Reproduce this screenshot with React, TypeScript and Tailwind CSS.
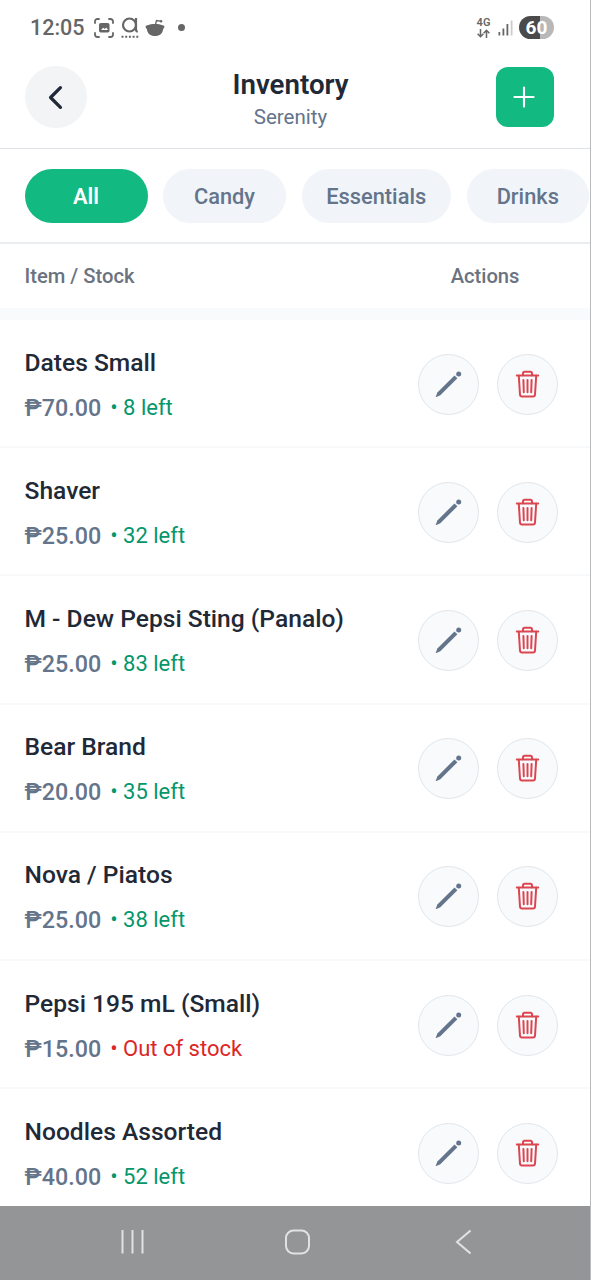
import { IoAdd, IoChevronBack } from 'react-icons/io5';

const categories = [
  { name: 'All', width: 'w-[123px]' },
  { name: 'Candy', width: 'w-[123px]' },
  { name: 'Essentials', width: 'w-[149.5px]' },
  { name: 'Drinks', width: 'w-[122.5px]' },
];

const items = [
  { name: 'Dates Small', price: '70.00', stock: 8 },
  { name: 'Shaver', price: '25.00', stock: 32 },
  { name: 'M - Dew Pepsi Sting (Panalo)', price: '25.00', stock: 83 },
  { name: 'Bear Brand', price: '20.00', stock: 35 },
  { name: 'Nova / Piatos', price: '25.00', stock: 38 },
  { name: 'Pepsi 195 mL (Small)', price: '15.00', stock: 0 },
  { name: 'Noodles Assorted', price: '40.00', stock: 52 },
];

function PencilIcon() {
  return (
    <svg width="31" height="31" viewBox="0 0 31 31" fill="currentColor">
      <path d="M21.500 6.400l2.900 2.900L7.300 26.300 3.400 28q-.8.200-.6-.6l1.600-3.900z" />
      <circle cx="25.700" cy="5.100" r="2.500" />
    </svg>
  );
}

function TrashIcon() {
  return (
    <svg width="31" height="31" viewBox="0 0 31 31" fill="none" stroke="currentColor" strokeWidth="2" strokeLinecap="round" strokeLinejoin="round">
      <path d="M4.800 6.500h21.400" />
      <path d="M11 6.200V4.200a1.400 1.400 0 0 1 1.400-1.400h6.200A1.400 1.400 0 0 1 20 4.200v2" />
      <path d="M6.800 6.800l1.200 18.700a2 2 0 0 0 2 1.900h11a2 2 0 0 0 2-1.900L24.200 6.800" />
      <path d="M11.400 11l.4 12.200M15.500 11v12.200M19.600 11l-.4 12.200" />
    </svg>
  );
}

function StatusBar() {
  return (
    <div className="flex h-[55px] shrink-0 items-center justify-between pl-[30px] pr-[36px] text-[#666]">
      <div className="flex items-center">
        <span className="w-[64px] pt-[2px] text-[21.5px] font-medium">12:05</span>

        {/* Screenshot */}
        <svg width="20" height="20" viewBox="0 0 20 20" fill="none" stroke="currentColor" strokeWidth="1.8" strokeLinecap="round">
          <path d="M1 5V3.5A2.5 2.5 0 0 1 3.5 1H5M15 1h1.5A2.5 2.5 0 0 1 19 3.5V5M19 15v1.5a2.5 2.5 0 0 1-2.5 2.5H15M5 19H3.5A2.5 2.5 0 0 1 1 16.5V15" />
          <rect x="5" y="5" width="10.5" height="9.5" rx="1.8" fill="currentColor" stroke="none" />
          <path d="M7 12l2.2-2.2 1.6 1.2 1.5-1.6L14 12z" fill="#fff" stroke="none" />
        </svg>

        {/* App notification */}
        <svg className="ml-[7px]" width="18" height="22" viewBox="0 0 18 22" fill="none" stroke="currentColor" strokeWidth="2.2">
          <circle cx="8.5" cy="8" r="6.5" />
          <path d="M15 1v11.5q0 2 1.8 2" />
          <path d="M.5 19.800h17" strokeWidth="2" strokeDasharray="2 1.700" />
        </svg>

        {/* Reddit */}
        <svg className="ml-[6px]" width="20" height="18" viewBox="0 0 20 18" fill="currentColor">
          <path d="M2.6 6.2C4.5 5.500 7 5 10 5s5.500.5 7.400 1.200c2.400-.2 2.700 2.600.7 3.700C17.800 14.300 14.500 17 10 17S2.200 14.300 1.900 9.900C-.1 8.800.2 6 2.600 6.200z" />
          <path d="M10.500 5.500l1-4 4 .6" fill="none" stroke="currentColor" strokeWidth="1.300" />
          <circle cx="16" cy="2.200" r="1.300" />
        </svg>
        <span className="ml-[13px] size-[7px] rounded-full bg-[#666]" />
      </div>

      <div className="flex items-center">
        <div className="flex w-[15px] flex-col items-center">
          <span className="text-[11px] font-semibold leading-[10px]">4G</span>
          <svg className="mt-px" width="13" height="9" viewBox="0 0 13 9" fill="none" stroke="currentColor" strokeWidth="1.500">
            <path d="M3.500 0v7.500M.6 4.800l2.900 2.900 2.900-2.900M9.500 9V1.300M6.600 4.200l2.900-2.900 2.900 2.900" />
          </svg>
        </div>
        <svg className="ml-[7px]" width="15" height="16" viewBox="0 0 15 16" fill="currentColor">
          <rect x="0.500" y="12" width="1.700" height="3.500" />
          <rect x="4.500" y="8.500" width="1.800" height="7" />
          <rect x="8.500" y="4" width="1.800" height="11.500" />
          <rect x="12.700" y="0.500" width="1.800" height="15" fill="#ccc" />
        </svg>
        <div className="ml-[6px] flex h-[23px] w-[35px] items-center justify-center rounded-full bg-linear-to-r from-[#4a4a4a] from-60% to-[#b8b8b8] to-60% pt-px text-[19px] font-bold text-white">
          60
        </div>
      </div>
    </div>
  );
}

function Header() {
  return (
    <header className="flex h-[94px] shrink-0 items-start justify-between border-b border-[#dfe2e6] pl-[25px] pr-[36px] pt-[11px]">
      <button className="flex size-[62px] items-center justify-center rounded-full bg-[#f3f4f6] pr-px text-[#1f2937]">
        <IoChevronBack size={35} />
      </button>
      <div className="flex flex-col items-center pr-[2px]">
        <h1 className="mt-[2px] text-[27.700px] font-semibold leading-[34px] text-[#1f2937]">Inventory</h1>
        <p className="mt-[2px] text-[20.500px] leading-[26px] text-[#64748b]">Serenity</p>
      </div>
      <button className="mt-px flex h-[60px] w-[58px] items-center justify-center rounded-[12px] bg-[#12b981] pr-px text-white">
        <IoAdd size={34} />
      </button>
    </header>
  );
}

function Categories() {
  return (
    <nav className="flex h-[95px] shrink-0 gap-[15.500px] overflow-hidden border-b-2 border-[#e9edf0] pl-[24.500px] pt-[19.500px]">
      {categories.map((category, i) => (
        <button
          key={category.name}
          className={`${category.width} h-[54px] shrink-0 rounded-full pt-[3px] text-[21.800px] ${
            i === 0 ? 'bg-[#12b981] font-semibold text-white' : 'bg-[#f1f4f9] font-medium text-[#64748b]'
          }`}
        >
          {category.name}
        </button>
      ))}
    </nav>
  );
}

export default function App() {
  return (
    <div className="flex h-[1280px] w-[591px] flex-col overflow-hidden border-r border-[#b9bcbf] bg-white font-[Roboto,sans-serif]">
      <StatusBar />
      <Header />
      <Categories />

      {/* Column labels */}
      <div className="flex h-[64px] shrink-0 items-center justify-between pl-[24.500px] pr-[70.500px] pt-px text-[20.200px] font-medium text-[#6b7280]">
        <span>Item / Stock</span>
        <span>Actions</span>
      </div>

      {/* Item list */}
      <main className="min-h-0 flex-1 overflow-hidden border-t-[12px] border-[#f8fafc]">
        {items.map((item) => (
          <div key={item.name} className="flex h-[128.200px] items-center justify-between border-b-2 border-[#f8f9fa] pl-[24.500px] pr-[32px]">
            <div className="pt-[4px]">
              <h2 className="text-[24.600px] font-medium leading-[32px] text-[#1f2937]">{item.name}</h2>
              <div className="mt-[13px] flex items-center leading-[32px]">
                <span className="text-[23.300px] font-medium text-[#64748b]">₱{item.price}</span>
                {item.stock > 0 ? (
                  <span className="ml-[9px] text-[22px] text-[#059669]">• {item.stock} left</span>
                ) : (
                  <span className="ml-[9px] text-[22px] text-[#dc2626]">• Out of stock</span>
                )}
              </div>
            </div>
            <div className="flex gap-[18px] pt-[2px]">
              <button className="flex size-[61px] items-center justify-center rounded-full border-[1.500px] border-[#e2e6ec] bg-[#f8fafc] text-[#64748b]">
                <PencilIcon />
              </button>
              <button className="flex size-[61px] items-center justify-center rounded-full border-[1.500px] border-[#e2e6ec] bg-[#f8fafc] text-[#dc4650]">
                <TrashIcon />
              </button>
            </div>
          </div>
        ))}
      </main>

      {/* Android navigation */}
      <div className="flex h-[74px] shrink-0 items-center bg-[#949597] pb-[3px] pl-[120px] text-[#e2e2e2]">
        <svg width="25" height="26" viewBox="0 0 25 26" fill="none" stroke="currentColor" strokeWidth="2">
          <path d="M2.500 1v23.500M12.500 1v23.500M22.500 1v23.500" />
        </svg>
        <svg className="ml-[139px]" width="26" height="28" viewBox="0 0 26 28" fill="none" stroke="currentColor" strokeWidth="2">
          <rect x="2" y="2.500" width="23" height="23" rx="7.500" />
        </svg>
        <svg className="ml-[145px]" width="16" height="26" viewBox="0 0 16 26" fill="none" stroke="currentColor" strokeWidth="2">
          <path d="M15.500 1.500L2 13l13.500 11.500" />
        </svg>
      </div>
    </div>
  );
}
